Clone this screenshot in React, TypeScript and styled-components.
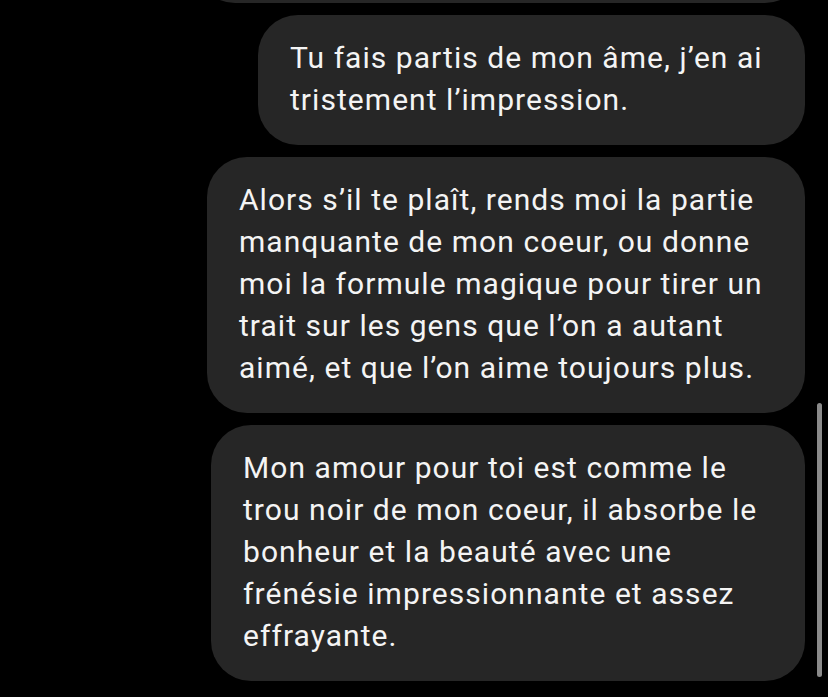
import React from "react";
import styled, { createGlobalStyle } from "styled-components";

const Global = createGlobalStyle`
  html, body { margin: 0; padding: 0; background: #000; }
  body { width: 828px; height: 697px; overflow: hidden; }
`;

const Screen = styled.div`
  position: relative;
  width: 828px;
  height: 697px;
  overflow: hidden;
  background: #000;
`;

const Thread = styled.div`
  display: flex;
  flex-direction: column;
  align-items: flex-end;
  gap: 12px;
  padding-right: 23px;
  margin-top: -97px;
`;

const Bubble = styled.div<{ $w: number; $h?: number }>`
  box-sizing: border-box;
  width: ${(p) => p.$w}px;
  ${(p) => (p.$h ? `height: ${p.$h}px;` : "")}
  padding: 22px 16px 24px 32px;
  border-radius: 40px;
  background: #262626;
  color: #f4f4f4;
  font-family: Roboto, "Liberation Sans", sans-serif;
  font-size: 30px;
  line-height: 42px;
  letter-spacing: 1.05px;
`;

const Line = styled.div`
  white-space: nowrap;
`;

const ScrollThumb = styled.div`
  position: absolute;
  left: 817px;
  top: 403px;
  width: 5px;
  height: 274px;
  border-radius: 3px;
  background: #8a8a8a;
`;

const messages: { w: number; lines: string[] }[] = [
  {
    w: 547,
    lines: ["Tu fais partis de mon âme, j’en ai", "tristement l’impression."],
  },
  {
    w: 598,
    lines: [
      "Alors s’il te plaît, rends moi la partie",
      "manquante de mon coeur, ou donne",
      "moi la formule magique pour tirer un",
      "trait sur les gens que l’on a autant",
      "aimé, et que l’on aime toujours plus.",
    ],
  },
  {
    w: 594,
    lines: [
      "Mon amour pour toi est comme le",
      "trou noir de mon coeur, il absorbe le",
      "bonheur et la beauté avec une",
      "frénésie impressionnante et assez",
      "effrayante.",
    ],
  },
];

export default function App() {
  return (
    <Screen>
      <Global />
      <Thread>
        <Bubble $w={610} $h={100} />
        {messages.map((m, i) => (
          <Bubble key={i} $w={m.w}>
            {m.lines.map((l, j) => (
              <Line key={j}>{l}</Line>
            ))}
          </Bubble>
        ))}
      </Thread>
      <ScrollThumb />
    </Screen>
  );
}
